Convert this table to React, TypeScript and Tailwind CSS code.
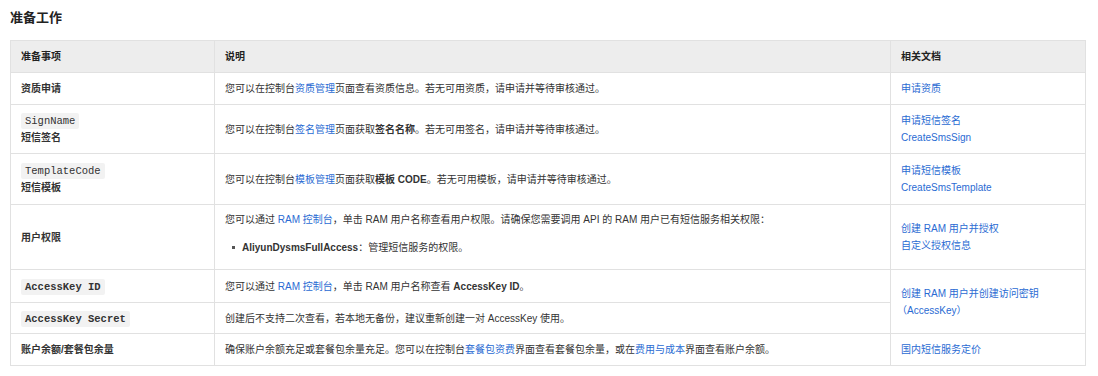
import React from "react";

const font = { fontFamily: '"Liberation Sans", "Noto Sans CJK SC", sans-serif' };

function A({ children }: { children: React.ReactNode }) {
  return <a href="#" className="text-[#2a6bd3] no-underline">{children}</a>;
}

function Code({ children, bold = false }: { children: React.ReactNode; bold?: boolean }) {
  return (
    <code
      className={`inline-block rounded-[2px] bg-[#f2f2f2] px-[4px] text-[10.5px] leading-[16px] text-[#333] ${bold ? "font-bold" : ""}`}
      style={{ fontFamily: '"Liberation Mono", "DejaVu Sans Mono", monospace' }}
    >
      {children}
    </code>
  );
}

const td = "border border-[#e1e1e1] px-[10px] align-middle";

export default function App() {
  return (
    <div className="min-h-[376px] w-[1098px] bg-white pl-[10px] pt-[9px] text-[#333]" style={font}>
      <h2 className="mb-[14px] text-[13px] font-bold leading-[17px] text-[#222]">准备工作</h2>

      <table className="w-[1075px] table-fixed border-collapse text-[10px] leading-[17px]">
        <colgroup>
          <col className="w-[204px]" />
          <col className="w-[676px]" />
          <col className="w-[195px]" />
        </colgroup>
        <thead>
          <tr className="h-[32px] bg-[#ededed]">
            <th className={`${td} text-left font-bold text-[#222]`}>准备事项</th>
            <th className={`${td} text-left font-bold text-[#222]`}>说明</th>
            <th className={`${td} text-left font-bold text-[#222]`}>相关文档</th>
          </tr>
        </thead>
        <tbody>
          <tr className="h-[32px]">
            <td className={`${td} font-bold`}>资质申请</td>
            <td className={td}>您可以在控制台<A>资质管理</A>页面查看资质信息。若无可用资质，请申请并等待审核通过。</td>
            <td className={td}><A>申请资质</A></td>
          </tr>
          <tr className="h-[49px]">
            <td className={td}>
              <div><Code>SignName</Code></div>
              <div className="font-bold">短信签名</div>
            </td>
            <td className={td}>
              您可以在控制台<A>签名管理</A>页面获取<b>签名名称</b>。若无可用签名，请申请并等待审核通过。
            </td>
            <td className={td}>
              <div><A>申请短信签名</A></div>
              <div><A>CreateSmsSign</A></div>
            </td>
          </tr>
          <tr className="h-[51px]">
            <td className={td}>
              <div><Code>TemplateCode</Code></div>
              <div className="font-bold">短信模板</div>
            </td>
            <td className={td}>
              您可以在控制台<A>模板管理</A>页面获取<b>模板 CODE</b>。若无可用模板，请申请并等待审核通过。
            </td>
            <td className={td}>
              <div><A>申请短信模板</A></div>
              <div><A>CreateSmsTemplate</A></div>
            </td>
          </tr>
          <tr className="h-[65px]">
            <td className={`${td} font-bold`}>用户权限</td>
            <td className={td}>
              <p>
                您可以通过 <A>RAM 控制台</A>，单击 RAM 用户名称查看用户权限。请确保您需要调用 API 的 RAM 用户已有短信服务相关权限：
              </p>
              <ul className="mb-[7px] mt-[11px] pl-[7px]">
                <li className="flex items-center gap-[7px]">
                  <span className="h-[3px] w-[3px] bg-[#555]" />
                  <span><b>AliyunDysmsFullAccess</b>：管理短信服务的权限。</span>
                </li>
              </ul>
            </td>
            <td className={td}>
              <div><A>创建 RAM 用户并授权</A></div>
              <div><A>自定义授权信息</A></div>
            </td>
          </tr>
          <tr className="h-[33px]">
            <td className={td}><Code bold>AccessKey ID</Code></td>
            <td className={td}>
              您可以通过 <A>RAM 控制台</A>，单击 RAM 用户名称查看 <b>AccessKey ID</b>。
            </td>
            <td className={td} rowSpan={2}>
              <div><A>创建 RAM 用户并创建访问密钥</A></div>
              <div className="-ml-[4px]"><A>（AccessKey）</A></div>
            </td>
          </tr>
          <tr className="h-[31px]">
            <td className={td}><Code bold>AccessKey Secret</Code></td>
            <td className={td}>创建后不支持二次查看，若本地无备份，建议重新创建一对 AccessKey 使用。</td>
          </tr>
          <tr className="h-[32px]">
            <td className={`${td} font-bold`}>账户余额/套餐包余量</td>
            <td className={td}>
              确保账户余额充足或套餐包余量充足。您可以在控制台<A>套餐包资费</A>界面查看套餐包余量，或在<A>费用与成本</A>界面查看账户余额。
            </td>
            <td className={td}><A>国内短信服务定价</A></td>
          </tr>
        </tbody>
      </table>
    </div>
  );
}
